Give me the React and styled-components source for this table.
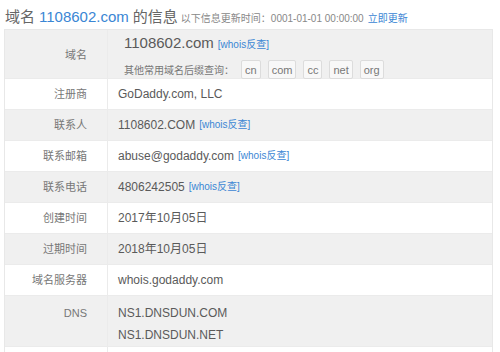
import React from "react";
import styled, { createGlobalStyle } from "styled-components";

const Global = createGlobalStyle`
  html, body { margin: 0; padding: 0; background: #fff; overflow: hidden; }
  body { font-family: "Liberation Sans", "Noto Sans CJK SC", sans-serif; }
`;

const Page = styled.div`
  width: 500px;
  height: 352px;
  overflow: hidden;
`;

const Title = styled.div`
  display: flex;
  align-items: baseline;
  height: 29px;
  padding: 5px 0 0 5px;
  box-sizing: border-box;
  white-space: nowrap;
`;

const TitleText = styled.span`
  font-size: 15px;
  color: ${(p) => (p.$blue ? "#3a86d4" : "#666")};
  margin-right: ${(p) => (p.$gap ? "4px" : "0")};
`;

const Note = styled.span`
  font-size: 10px;
  color: #888;
  margin-left: 3px;
`;

const Link = styled.a`
  color: #3a86d4;
  text-decoration: none;
  font-size: ${(p) => p.$size || "10px"};
  margin-left: ${(p) => p.$ml || "4px"};
`;

const Table = styled.div`
  margin-left: 4px;
  width: 489px;
  border: 1px solid #e8e8e8;
  border-bottom: none;
  box-sizing: border-box;
`;

const Row = styled.div`
  display: grid;
  grid-template-columns: 103px 1fr;
  height: ${(p) => p.$h || 31}px;
  box-sizing: border-box;
  background: ${(p) => (p.$alt ? "#f0f0f0" : "#fff")};
  border-bottom: 1px solid #ebebeb;
`;

const Label = styled.div`
  border-right: 1px solid #ebebeb;
  display: flex;
  justify-content: flex-end;
  align-items: ${(p) => (p.$top ? "flex-start" : "center")};
  padding: ${(p) => (p.$top ? "6px 20px 0 0" : "0 20px 0 0")};
  line-height: 22px;
  font-size: 11px;
  color: #777;
`;

const Value = styled.div`
  display: flex;
  flex-direction: ${(p) => (p.$col ? "column" : "row")};
  align-items: ${(p) => (p.$col ? "flex-start" : "center")};
  padding: ${(p) => (p.$col ? "6px 0 0 10px" : "0 0 0 10px")};
  line-height: 22px;
  font-size: 12px;
  color: #5a5a5a;
  white-space: nowrap;
`;

const DomainCell = styled.div`
  display: flex;
  flex-direction: column;
  justify-content: center;
  padding: 3px 0 0 16px;
  gap: 5px;
`;

const DomainLine = styled.div`
  display: flex;
  align-items: baseline;
  font-size: 15px;
  color: #5a5a5a;
  line-height: 20px;
`;

const SuffixLine = styled.div`
  display: flex;
  align-items: center;
  font-size: 10px;
  color: #777;
  gap: 7px;
`;

const Tag = styled.span`
  display: inline-flex;
  align-items: center;
  height: 17px;
  padding: 0 3px;
  border: 1px solid #dcdcdc;
  border-radius: 2px;
  background: #f8f8f8;
  font-size: 11px;
  color: #777;
`;

const rows = [
  { label: "注册商", value: "GoDaddy.com, LLC" },
  { label: "联系人", value: "1108602.COM", whois: true },
  { label: "联系邮箱", value: "abuse@godaddy.com", whois: true },
  { label: "联系电话", value: "4806242505", whois: true },
  { label: "创建时间", value: "2017年10月05日" },
  { label: "过期时间", value: "2018年10月05日" },
  { label: "域名服务器", value: "whois.godaddy.com" },
];

export default function App() {
  return (
    <Page>
      <Global />
      <Title>
        <TitleText $gap>域名</TitleText>
        <TitleText $blue $gap>1108602.com</TitleText>
        <TitleText>的信息</TitleText>
        <Note>以下信息更新时间：0001-01-01 00:00:00</Note>
        <Link $ml="4px">立即更新</Link>
      </Title>
      <Table>
        <Row $alt $h={49}>
          <Label>域名</Label>
          <DomainCell>
            <DomainLine>
              1108602.com
              <Link $ml="4px">[whois反查]</Link>
            </DomainLine>
            <SuffixLine>
              <span>其他常用域名后缀查询：</span>
              {["cn", "com", "cc", "net", "org"].map((t) => (
                <Tag key={t}>{t}</Tag>
              ))}
            </SuffixLine>
          </DomainCell>
        </Row>
        {rows.map((r, i) => (
          <Row key={r.label} $alt={i % 2 === 1}>
            <Label>{r.label}</Label>
            <Value>
              {r.value}
              {r.whois && <Link>[whois反查]</Link>}
            </Value>
          </Row>
        ))}
        <Row $alt $h={51}>
          <Label $top>DNS</Label>
          <Value $col>
            <span>NS1.DNSDUN.COM</span>
            <span>NS1.DNSDUN.NET</span>
          </Value>
        </Row>
        <Row>
          <Label />
          <Value />
        </Row>
      </Table>
    </Page>
  );
}
